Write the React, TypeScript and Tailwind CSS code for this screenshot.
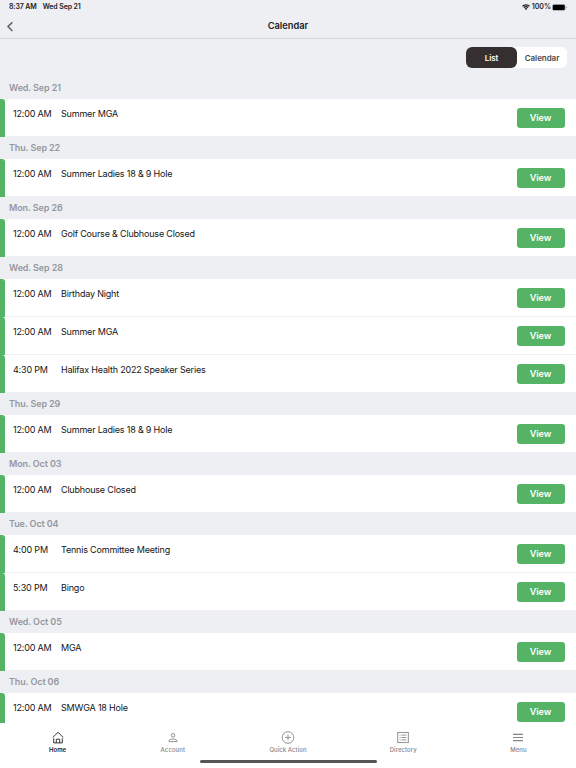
import type { ReactNode } from 'react';

type Event = { time: string; title: string };
type Day = { date: string; events: Event[] };

const days: Day[] = [
  { date: 'Wed. Sep 21', events: [{ time: '12:00 AM', title: 'Summer MGA' }] },
  { date: 'Thu. Sep 22', events: [{ time: '12:00 AM', title: 'Summer Ladies 18 & 9 Hole' }] },
  { date: 'Mon. Sep 26', events: [{ time: '12:00 AM', title: 'Golf Course & Clubhouse Closed' }] },
  {
    date: 'Wed. Sep 28',
    events: [
      { time: '12:00 AM', title: 'Birthday Night' },
      { time: '12:00 AM', title: 'Summer MGA' },
      { time: '4:30 PM', title: 'Halifax Health 2022 Speaker Series' },
    ],
  },
  { date: 'Thu. Sep 29', events: [{ time: '12:00 AM', title: 'Summer Ladies 18 & 9 Hole' }] },
  { date: 'Mon. Oct 03', events: [{ time: '12:00 AM', title: 'Clubhouse Closed' }] },
  {
    date: 'Tue. Oct 04',
    events: [
      { time: '4:00 PM', title: 'Tennis Committee Meeting' },
      { time: '5:30 PM', title: 'Bingo' },
    ],
  },
  { date: 'Wed. Oct 05', events: [{ time: '12:00 AM', title: 'MGA' }] },
  { date: 'Thu. Oct 06', events: [{ time: '12:00 AM', title: 'SMWGA 18 Hole' }] },
];

function StatusBar() {
  return (
    <div className="flex h-[14px] items-center justify-between pl-[9px] pr-[9px] text-[7px] font-semibold tracking-[-0.12px] text-[#222]">
      <div className="flex gap-[6px]">
        <span>8:37 AM</span>
        <span>Wed Sep 21</span>
      </div>
      <div className="flex items-center">
        <svg width="8" height="6" viewBox="0 0 16 12" fill="none" stroke="#111" strokeWidth="2.3">
          <path d="M1 4.5a10 10 0 0 1 14 0" />
          <path d="M3.7 7.4a6.2 6.2 0 0 1 8.6 0" />
          <path d="M8 12 5.4 9.3a3.8 3.8 0 0 1 5.2 0z" fill="#111" stroke="none" />
        </svg>
        <span className="ml-[2px] tracking-normal">100%</span>
        <svg className="ml-[1px]" width="15" height="7" viewBox="0 0 15 7">
          <rect x="0.3" y="0.3" width="13" height="6.2" rx="1.6" fill="#777" />
          <rect x="1" y="0.9" width="11.6" height="5" rx="0.9" fill="#000" />
          <path d="M14 2.4v2a1.2 1.2 0 0 0 0-2z" fill="#777" />
        </svg>
      </div>
    </div>
  );
}

function EventRow({ event }: { event: Event }) {
  return (
    <div className="flex h-[38px] shrink-0 bg-white">
      <div className="w-[5px] rounded-tr-[3px] bg-[#55b365]" />
      <div className="flex flex-1 items-start border-b border-[#f0f0f2] pl-2 pr-[11.5px] text-[9px] leading-3 tracking-[-0.19px] text-[#151515]">
        <span className="mt-[9px] w-12">{event.time}</span>
        <span className="mt-[9px] flex-1">{event.title}</span>
        <button className="mt-[9px] h-5 w-12 rounded-[3px] bg-[#55b365] text-[9px] font-semibold leading-5 tracking-normal text-white">
          View
        </button>
      </div>
    </div>
  );
}

function Tab({ label, active, children }: { label: string; active?: boolean; children: ReactNode }) {
  return (
    <a className={`flex flex-1 flex-col items-center ${active ? 'text-[#222]' : 'text-[#85858a]'}`}>
      <svg width="14" height="14" viewBox="0 0 14 14" fill="none" stroke="currentColor" strokeWidth="0.9">
        {children}
      </svg>
      <span className={`mt-[1px] text-[6px] leading-[8px] ${active ? 'font-semibold' : 'font-medium tracking-[0.05px]'}`}>
        {label}
      </span>
    </a>
  );
}

function TabBar() {
  return (
    <nav className="h-[45px] bg-white pt-2">
      <div className="flex">
        <Tab label="Home" active>
          <path d="M1.7 6.5 7 1.3l5.3 5.2M2.7 7.3v4.6h8.6V7.3M5.3 11.9V8.2h3.4v3.7" />
        </Tab>
        <Tab label="Account">
          <circle cx="7" cy="4.3" r="1.8" />
          <path d="M3 10.6v-.8c0-1.1 1.8-1.7 4-1.7s4 .6 4 1.7v.8z" />
        </Tab>
        <Tab label="Quick Action">
          <circle cx="7" cy="6.5" r="5.8" />
          <path d="M7 3.7v5.6M4.2 6.5h5.6" />
        </Tab>
        <Tab label="Directory">
          <rect x="1.7" y="1.4" width="10.6" height="10.2" />
          <path d="M5.6 4.1h4.8M5.6 6.5h4.8M5.6 8.9h4.8M3.6 4.1h1M3.6 6.5h1M3.6 8.9h1" />
        </Tab>
        <Tab label="Menu">
          <path d="M2 3.4h10M2 6.5h10M2 9.6h10" strokeWidth="1.1" />
        </Tab>
      </div>
      <div className="mx-auto mt-[6px] h-[3px] w-[177px] rounded-full bg-[#555]" />
    </nav>
  );
}

export default function App() {
  return (
    <div className="flex h-[768px] w-[576px] flex-col overflow-hidden bg-[#edeff3] font-['Inter',sans-serif]">
      <StatusBar />
      <header className="grid h-[25px] grid-cols-3 items-center border-b border-[#d5d7db] px-[6px]">
        <svg width="8" height="11" viewBox="0 0 8 11" fill="none" stroke="#666" strokeWidth="1.6">
          <path d="M6.4 1.2 2 5.6 6.4 10" />
        </svg>
        <h1 className="text-center text-[9.3px] font-semibold text-[#222]">Calendar</h1>
      </header>

      <div className="flex h-[38px] justify-end pr-[9px] pt-2">
        <div className="flex h-[21px] rounded-[6px] bg-white text-[8px] font-semibold tracking-[-0.05px]">
          <button className="w-[51px] rounded-[6px] bg-[#352f2f] text-white">List</button>
          <button className="w-[50px] text-[#4a4a4e]">Calendar</button>
        </div>
      </div>

      <main className="h-[646px] overflow-hidden">
        {days.map((day) => (
          <section key={day.date}>
            <h2 className="h-[22px] pl-[9px] text-[9px] font-semibold leading-[21px] tracking-[-0.1px] text-[#95979f]">
              {day.date}
            </h2>
            {day.events.map((event, i) => (
              <EventRow key={i} event={event} />
            ))}
          </section>
        ))}
      </main>
      <TabBar />
    </div>
  );
}
